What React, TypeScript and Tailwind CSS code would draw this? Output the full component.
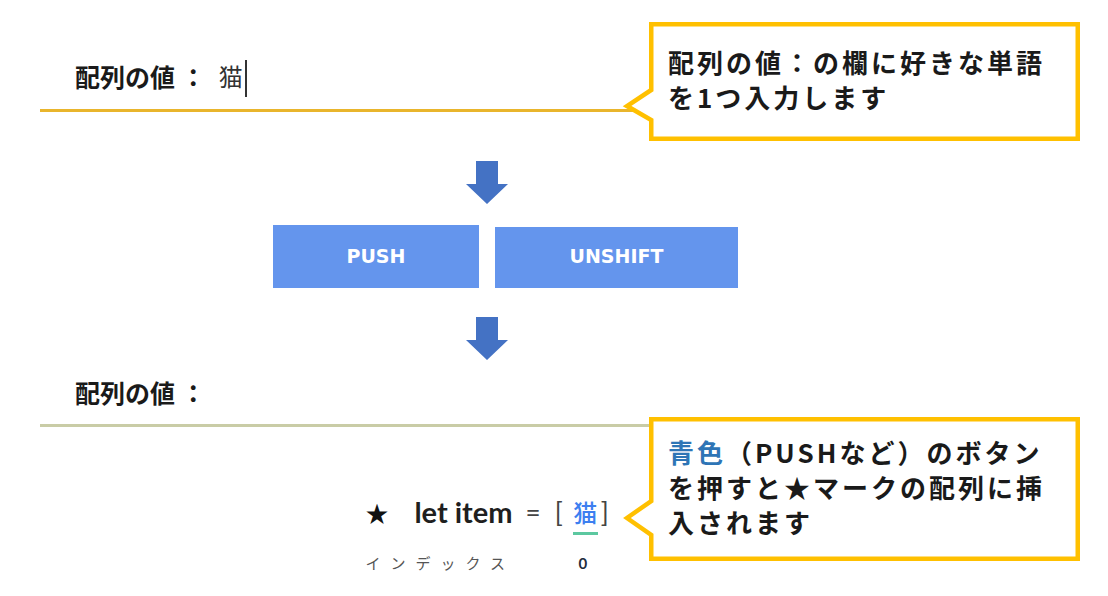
import React from 'react';

const tips = {
    top: {
        lines: ['配列の値：の欄に好きな単語', 'を1つ入力します']
    },
    bottom: {
        lines: ['を押すと★マークの配列に挿', '入されます']
    }
};

function DownArrow() {
    return (
        <svg width="42" height="43" viewBox="0 0 42 43">
            <path d="M10 0H32V23H42L21 43L0 23H10Z" fill="#4472C4" />
        </svg>
    );
}

// yellow speech box, tail pointing left
function Bubble({ h, tip, j1, j2 }: { h: number; tip: number; j1: number; j2: number }) {
    const b = h - 2.25;
    const pts = `33.25,2.25 459.75,2.25 459.75,${b} 33.25,${b} 33.25,${j2} 9,${tip} 33.25,${j1}`;
    return (
        <svg className="absolute inset-0" width="464" height={h} viewBox={`0 0 464 ${h}`}>
            <polygon points={pts} fill="#ffffff" stroke="#FFC000" strokeWidth="4.5" strokeLinejoin="miter" />
        </svg>
    );
}

function ValueLabel() {
    return <span className="text-[25px] leading-[36px] font-bold text-[#1a1a1a]">配列の値 ：</span>;
}

export default function App() {
    return (
        <div className="relative w-[1108px] h-[596px] overflow-hidden bg-white font-['Noto_Sans_CJK_JP',sans-serif] text-[#1a1a1a]">
            {/* input */}
            <div className="ml-[40px] w-[620px] pt-[58px] pb-[15px] pl-[35px] border-b-[3px] border-[#E9B52C]">
                <div className="h-[36px] flex items-start">
                    <ValueLabel />
                    <span className="ml-[13px] text-[24px] leading-[36px] text-[#333]">猫</span>
                    <span className="ml-[2px] mt-[2px] w-[2px] h-[37px] shrink-0 bg-[#333]"></span>
                </div>
            </div>

            <div className="w-[974px] flex justify-center mt-[49px]">
                <DownArrow />
            </div>

            <div className="flex items-end gap-[16px] ml-[273px] mt-[21px] font-['DejaVu_Sans',sans-serif] font-bold text-white text-[19px]">
                <div className="w-[206px] h-[63px] bg-[#6495ED] flex items-center justify-center">PUSH</div>
                <div className="w-[243px] h-[61px] bg-[#6495ED] flex items-center justify-center pb-[2px]">UNSHIFT</div>
            </div>

            <div className="w-[974px] flex justify-center mt-[29px]">
                <DownArrow />
            </div>

            <div className="ml-[40px] w-[620px] mt-[14px] pl-[35px] pb-[14px] border-b-[3px] border-[#C9CCA6] flex">
                <ValueLabel />
            </div>

            {/* array view */}
            <div className="w-[974px] flex justify-center mt-[71px]">
                <div className="flex flex-col items-start">
                    <div className="flex items-start leading-[28px]">
                        <span className="text-[23px] text-[#111]">★</span>
                        <span className="ml-[26px] text-[29px] font-bold font-['Lato',sans-serif] text-[#1f1f1f]">let item</span>
                        <span className="ml-[13px] text-[26px] font-['Lato',sans-serif] text-[#444]">=</span>
                        <span className="ml-[14px] text-[26px] font-['Lato',sans-serif] text-[#444]">[</span>
                        <span className="ml-[10px] w-[25px] text-center pb-[6px] border-b-[3px] border-[#5CC8A0] text-[24px] font-medium text-[#3D7FF0]">猫</span>
                        <span className="ml-[3px] text-[26px] font-['Lato',sans-serif] text-[#444]">]</span>
                    </div>
                    <div className="mt-[18px] flex items-center leading-[20px]">
                        <span className="w-[205px] text-[15px] tracking-[10px] text-[#555] whitespace-nowrap">インデックス</span>
                        <span className="w-[25px] text-center text-[15px] font-bold font-['Lato',sans-serif] text-[#1f2d3d]">0</span>
                    </div>
                </div>
            </div>

            {/* callouts */}
            <div className="absolute left-[618px] top-[22px] w-[464px] h-[119px]">
                <Bubble h={119} tip={84} j1={68} j2={98} />
                <div className="relative pl-[50px] pt-[22px] text-[26px] leading-[35px] font-bold tracking-[3px] whitespace-nowrap">
                    {tips.top.lines.map((l) => (
                        <div key={l}>{l}</div>
                    ))}
                </div>
            </div>

            <div className="absolute left-[618px] top-[417px] w-[464px] h-[144px]">
                <Bubble h={144} tip={101} j1={84} j2={118} />
                <div className="relative pl-[50px] pt-[17px] text-[26px] leading-[35px] font-bold tracking-[3px] whitespace-nowrap">
                    <div>
                        <span className="text-[#2E75B6]">青色</span>（PUSHなど）のボタン
                    </div>
                    {tips.bottom.lines.map((l) => (
                        <div key={l}>{l}</div>
                    ))}
                </div>
            </div>
        </div>
    );
}
